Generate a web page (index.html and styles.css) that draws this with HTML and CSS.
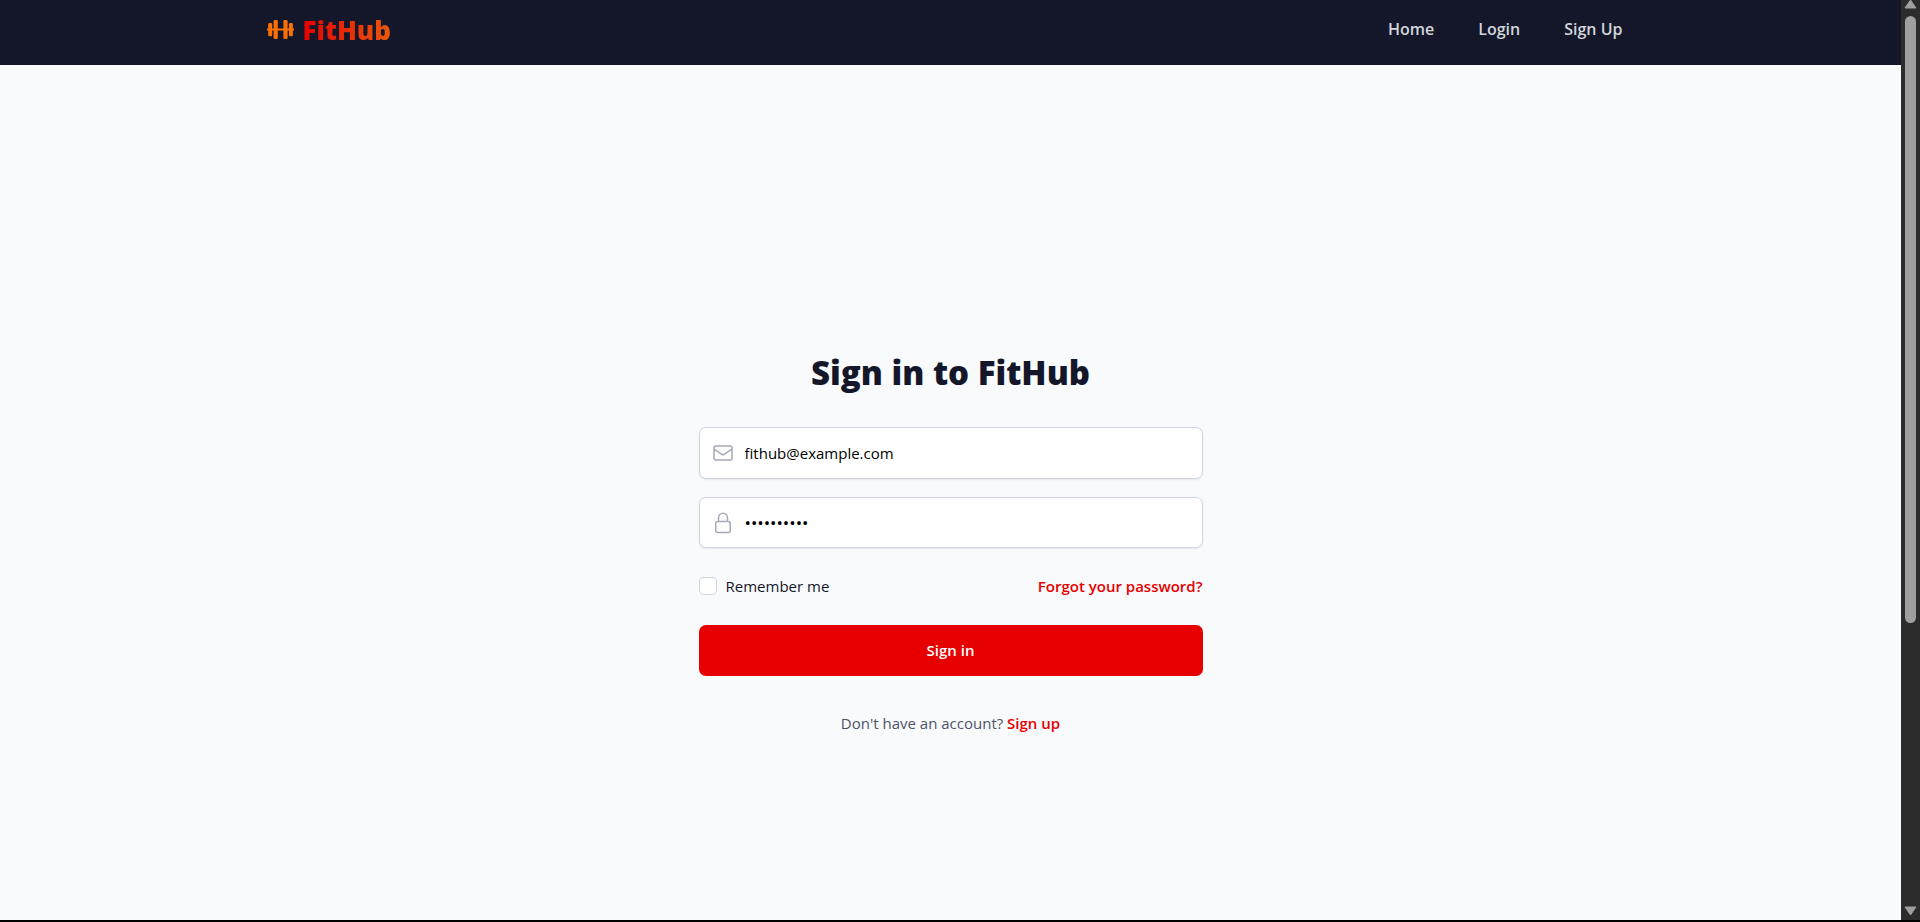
FILE: index.html
```html
<!DOCTYPE html>
<html lang="en">
<head>
<meta charset="utf-8">
<meta name="viewport" content="width=device-width, initial-scale=1">
<title>Sign in to FitHub</title>
<link rel="stylesheet" href="styles.css">
</head>
<body>
<div class="viewport">
  <div class="page">
    <header class="header">
      <div class="container">
        <a class="logo" href="#">
          <svg class="logo-icon" viewBox="0 0 28 24" aria-hidden="true">
            <path d="M0 10.500h27v2H0z"/>
            <rect x="1.200" y="5" width="4" height="13.200" rx="1.200"/>
            <rect x="6.600" y="2" width="4.200" height="19" rx="1.200"/>
            <rect x="16.400" y="2" width="4.200" height="19" rx="1.200"/>
            <rect x="21.900" y="5" width="4" height="13.200" rx="1.200"/>
          </svg>
          <span class="logo-text">FitHub</span>
        </a>
        <nav class="nav">
          <a href="#">Home</a>
          <a href="#">Login</a>
          <a href="#">Sign Up</a>
        </nav>
      </div>
    </header>
    <main class="main">
      <form class="form">
        <h1 class="title">Sign in to FitHub</h1>
        <div class="field">
          <label class="field-label" for="email"><svg class="field-icon" viewBox="0 0 24 24" aria-hidden="true"><path d="M3 8l7.890 5.260a2 2 0 0 0 2.220 0L21 8M5 19h14a2 2 0 0 0 2-2V7a2 2 0 0 0-2-2H5a2 2 0 0 0-2 2v10a2 2 0 0 0 2 2z"/></svg></label>
          <input class="input" id="email" type="email" aria-label="Email address" value="fithub@example.com">
        </div>
        <div class="field">
          <label class="field-label" for="password"><svg class="field-icon" viewBox="0 0 24 24" aria-hidden="true"><path d="M16.500 10.500V6.750a4.500 4.500 0 1 0-9 0v3.750M6.750 21.500h10.500a2 2 0 0 0 2-2v-7a2 2 0 0 0-2-2H6.750a2 2 0 0 0-2 2v7a2 2 0 0 0 2 2z"/></svg></label>
          <input class="input input-password" id="password" type="password" aria-label="Password" value="fithub1234">
        </div>
        <div class="options">
          <label class="remember" for="remember"><input class="checkbox" id="remember" type="checkbox">Remember me</label>
          <a class="link" href="#">Forgot your password?</a>
        </div>
        <button class="submit" type="submit">Sign in</button>
        <p class="signup">Don't have an account? <a class="link" href="#">Sign up</a></p>
      </form>
    </main>
  </div>
  <div class="scrollbar" aria-hidden="true">
    <svg class="arrow" viewBox="0 0 13 10"><path d="M6.500 0L12 8H1z"/></svg>
    <div class="track"><div class="thumb"></div></div>
    <svg class="arrow" viewBox="0 0 13 10"><path d="M6.500 9L12 1H1z"/></svg>
  </div>
</div>
</body>
</html>
```
FILE: styles.css
```css
* {
  box-sizing: border-box;
}

body {
  margin: 0;
  background: #000;
  color: #14172a;
  font: 15px/24px "Segoe UI", "Open Sans", "Noto Sans", sans-serif;
}

a {
  text-decoration: none;
}

.viewport {
  display: flex;
  min-height: 100vh;
  padding-bottom: 2px;
}

.page {
  flex: 1;
  display: flex;
  flex-direction: column;
  background: #f9fafc;
}

.header {
  padding: 10px 0 15px;
  background: #14172a;
}

.container {
  display: flex;
  align-items: center;
  justify-content: space-between;
  max-width: 1400px;
  margin: 0 auto;
  padding: 0 16px;
}

.logo {
  display: flex;
  align-items: center;
  gap: 8px;
}

.logo-icon {
  width: 28px;
  height: 24px;
  fill: #f97006;
}

.logo-text {
  font-size: 26px;
  font-weight: 800;
  line-height: 40px;
  background: linear-gradient(90deg, #e60000, #ea580c);
  background-clip: text;
  -webkit-background-clip: text;
  color: transparent;
}

.nav {
  display: flex;
  gap: 20px;
}

.nav a {
  padding: 6px 12px 8px;
  color: #d1d5db;
  font-size: 16px;
  font-weight: 600;
}

.main {
  flex: 1;
  display: flex;
  align-items: center;
  justify-content: center;
  padding: 101px 16px 0;
}

.form {
  width: 100%;
  max-width: 504px;
}

.title {
  margin: 0 0 32px;
  font-size: 33px;
  font-weight: 800;
  line-height: 44px;
  text-align: center;
}

.field {
  position: relative;
  margin-bottom: 18px;
}

.field-label {
  position: absolute;
  top: 0;
  bottom: 0;
  left: 12px;
  display: flex;
  align-items: center;
}

.field-icon {
  width: 24px;
  height: 24px;
  fill: none;
  stroke: #a5a9b9;
  stroke-width: 1.5;
  stroke-linecap: round;
  stroke-linejoin: round;
}

.input {
  display: block;
  width: 100%;
  height: 52px;
  padding: 0 16px 0 45px;
  border: 1px solid #d1d5e0;
  border-radius: 7px;
  background: #fff;
  box-shadow: 0 1px 2px rgba(0, 0, 0, 0.08);
  color: #000;
  font: inherit;
}

.input-password {
  height: 51px;
  font-size: 17px;
}

.options {
  display: flex;
  align-items: center;
  justify-content: space-between;
  margin: 26px 0 27px;
}

.remember {
  display: flex;
  align-items: center;
  gap: 9px;
}

.checkbox {
  appearance: none;
  width: 18px;
  height: 18px;
  margin: 0;
  border: 1px solid #d1d5e0;
  border-radius: 4px;
  background: #fff;
}

.link {
  color: #e60000;
  font-weight: 600;
}

.submit {
  display: block;
  width: 100%;
  height: 51px;
  padding: 0 16px 2px;
  border: 0;
  border-radius: 7px;
  background: #e60000;
  color: #fff;
  font: inherit;
  font-weight: 600;
}

.signup {
  margin: 35px 0 0;
  color: #4b5568;
  text-align: center;
}

.scrollbar {
  display: flex;
  flex-direction: column;
  align-items: center;
  width: 19px;
  background: #2c2c2c;
}

.arrow {
  width: 13px;
  height: 10px;
  fill: #9f9f9f;
  stroke: #9f9f9f;
  stroke-width: 1;
  stroke-linejoin: round;
}

.track {
  flex: 1;
  width: 11px;
  padding: 6px 0;
  margin-bottom: 4px;
}

.track + .arrow {
  margin-bottom: 4px;
}

.thumb {
  height: 69%;
  border-radius: 6px;
  background: #9f9f9f;
}
```
